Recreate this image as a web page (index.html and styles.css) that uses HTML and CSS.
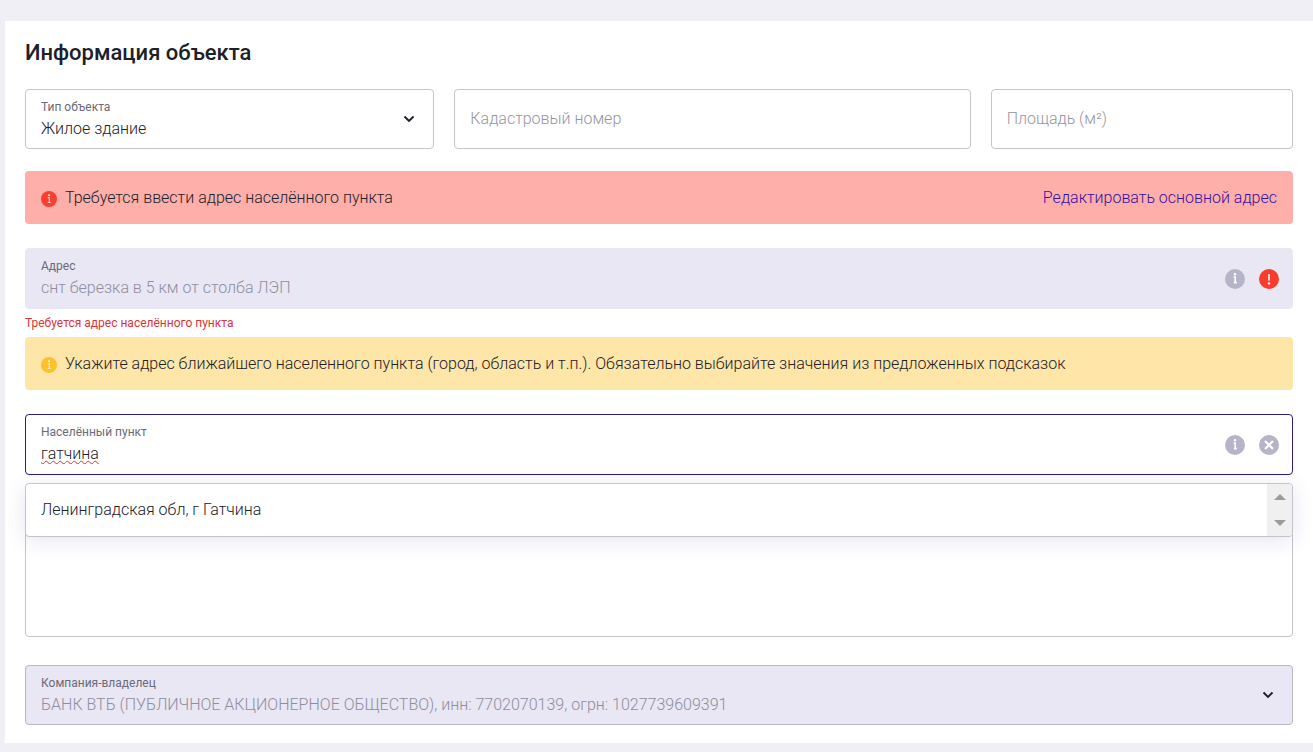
FILE: index.html
```html
<!DOCTYPE html>
<html lang="ru">
<head>
<meta charset="utf-8">
<meta name="viewport" content="width=device-width, initial-scale=1">
<title>Информация объекта</title>
<link rel="stylesheet" href="styles.css">
</head>
<body>
<main class="card">
  <h1 class="title">Информация объекта</h1>
  <form class="form">
    <div class="row">
      <div class="field field-select">
        <div class="field-body">
          <label class="label" for="type">Тип объекта</label>
          <select class="control" id="type"><option>Жилое здание</option></select>
        </div>
        <svg class="chevron" viewBox="0 0 24 24" aria-hidden="true"><path d="M7.5 9.5l4.5 4.5 4.5-4.5"/></svg>
      </div>
      <div class="field">
        <input class="control" id="cadastre" type="text" aria-label="Кадастровый номер" placeholder="Кадастровый номер">
      </div>
      <div class="field">
        <input class="control" id="area" type="text" aria-label="Площадь (м²)" placeholder="Площадь (м²)">
      </div>
    </div>

    <div class="alert alert-error">
      <svg class="alert-icon" viewBox="0 0 20 20" aria-hidden="true"><circle cx="10" cy="10" r="10"/><path class="mark" d="M8.4 8.4h1.9v6.2M8.4 14.4h3.8"/><circle class="dot" cx="10" cy="5.4" r="1.2"/></svg>
      <span class="alert-text">Требуется ввести адрес населённого пункта</span>
      <a class="link" href="#address">Редактировать основной адрес</a>
    </div>

    <div class="field field-wide field-disabled">
      <div class="field-body">
        <label class="label" for="address">Адрес</label>
        <input class="control" id="address" type="text" value="снт березка в 5 км от столба ЛЭП" disabled>
      </div>
      <button class="icon-button" type="button" aria-label="Справка">
        <svg class="icon" viewBox="0 0 20 20"><circle cx="10" cy="10" r="10"/><path class="mark" d="M8.6 8h1.6v5.6M8.8 13.6h3"/><circle class="dot" cx="10" cy="5.2" r="1.2"/></svg>
      </button>
      <svg class="icon icon-error" viewBox="0 0 20 20" role="img" aria-label="Ошибка"><circle cx="10" cy="10" r="10"/><path class="mark" d="M10 5v6.4"/><circle class="dot" cx="10" cy="14.4" r="1.2"/></svg>
    </div>
    <p class="error-text">Требуется адрес населённого пункта</p>

    <div class="alert alert-warning">
      <svg class="alert-icon" viewBox="0 0 20 20" aria-hidden="true"><circle cx="10" cy="10" r="10"/><path class="mark" d="M8.4 8.4h1.9v6.2M8.4 14.4h3.8"/><circle class="dot" cx="10" cy="5.4" r="1.2"/></svg>
      <span class="alert-text">Укажите адрес ближайшего населенного пункта (город, область и т.п.). Обязательно выбирайте значения из предложенных подсказок</span>
    </div>

    <div class="combo">
      <div class="field field-wide field-active">
        <div class="field-body">
          <label class="label" for="town">Населённый пункт</label>
          <input class="control misspelled" id="town" type="text" value="гатчина" spellcheck="false">
        </div>
        <button class="icon-button" type="button" aria-label="Справка">
          <svg class="icon" viewBox="0 0 20 20"><circle cx="10" cy="10" r="10"/><path class="mark" d="M8.6 8h1.6v5.6M8.8 13.6h3"/><circle class="dot" cx="10" cy="5.2" r="1.2"/></svg>
        </button>
        <button class="icon-button" type="button" aria-label="Очистить">
          <svg class="icon" viewBox="0 0 20 20"><circle cx="10" cy="10" r="10"/><path class="mark mark-bold" d="M6 6l8 8M14 6l-8 8"/></svg>
        </button>
      </div>
      <div class="suggestions">
        <button class="suggestion" type="button">Ленинградская обл, г Гатчина</button>
        <div class="scroller" aria-hidden="true">
          <svg class="arrow" viewBox="0 0 12 6"><path d="M0 6l6-6 6 6z"/></svg>
          <svg class="arrow" viewBox="0 0 12 6"><path d="M0 0l6 6 6-6z"/></svg>
        </div>
      </div>
    </div>

    <textarea class="comment" aria-label="Комментарий"></textarea>

    <div class="field field-select field-disabled field-bordered">
      <div class="field-body">
        <label class="label" for="owner">Компания-владелец</label>
        <select class="control" id="owner" disabled><option>БАНК ВТБ (ПУБЛИЧНОЕ АКЦИОНЕРНОЕ ОБЩЕСТВО), инн: 7702070139, огрн: 1027739609391</option></select>
      </div>
      <svg class="chevron" viewBox="0 0 24 24" aria-hidden="true"><path d="M7.5 9.5l4.5 4.5 4.5-4.5"/></svg>
    </div>
  </form>
</main>
</body>
</html>
```
FILE: styles.css
```css
* { box-sizing: border-box; }

body {
  margin: 0;
  padding: 21px 0 9px 5px;
  background: #f0eff6;
  color: #1c2029;
  font-family: Roboto, "Liberation Sans", sans-serif;
  font-size: 16px;
  font-weight: 350;
  line-height: 24px;
}

.card {
  padding: 18px 20px;
  background: #fff;
}

.title {
  margin: 0 0 22px;
  font-size: 22px;
  line-height: 28px;
  font-weight: 500;
}

.form {
  display: flex;
  flex-direction: column;
}

.row {
  display: grid;
  grid-template-columns: 409fr 516fr 302fr;
  gap: 20px;
}

.field {
  display: flex;
  align-items: center;
  gap: 14px;
  min-height: 60px;
  padding: 0 12px 0 15px;
  border: 1px solid #c5c4cc;
  border-radius: 4px;
  background: #fff;
}

.field-select .field-body { padding-top: 2px; }

.field-wide {
  min-height: 61px;
  padding: 0 13px 0 15px;
}

.field-disabled {
  border-color: #e9e7f3;
  background: #e9e7f3;
}

.field-bordered { border-color: #b9b6c9; }

.field-active { border-color: #2f1b7a; }

.field-body {
  display: flex;
  flex: 1;
  flex-direction: column;
  min-width: 0;
  gap: 2px;
}

.label {
  color: #6b6a78;
  font-size: 12px;
  font-weight: 400;
  line-height: 16px;
}

.control {
  width: 100%;
  height: 24px;
  margin: 0;
  padding: 0;
  border: 0;
  outline: 0;
  background: transparent;
  color: #1c2029;
  font: inherit;
  appearance: none;
}

.control::placeholder { color: #9594a3; }

.control:disabled {
  color: #8f8da0;
  opacity: 1;
}

.misspelled {
  text-decoration: underline wavy #e0302a 1px;
  text-decoration-skip-ink: none;
}

.chevron {
  flex: none;
  width: 24px;
  height: 24px;
  fill: none;
  stroke: #1c1a26;
  stroke-width: 1.8;
  pointer-events: none;
}

.alert {
  display: flex;
  align-items: center;
  gap: 8px;
  min-height: 53px;
  padding: 0 16px;
  border-radius: 4px;
}

.alert-error {
  margin: 22px 0 24px;
  background: #ffafa9;
}

.alert-warning {
  margin-bottom: 24px;
  background: #fee6a8;
}

.alert-icon {
  flex: none;
  width: 16px;
  height: 16px;
  margin-top: 2px;
}

.alert-error .alert-icon { fill: #f9402f; }
.alert-warning .alert-icon { fill: #fcc12b; }

.alert-text { flex: 1; }

.link {
  color: #35109c;
  text-decoration: none;
}

.icon-button {
  flex: none;
  width: 20px;
  height: 20px;
  padding: 0;
  border: 0;
  background: none;
}

.icon {
  display: block;
  flex: none;
  width: 20px;
  height: 20px;
  fill: #b6b4c9;
}

.icon-error { fill: #fa3c2d; }

.mark {
  fill: none;
  stroke: #fff;
  stroke-width: 1.6;
}

.alert .mark { stroke-width: 1.5; stroke-opacity: 0.7; }

.mark-bold { stroke-width: 2.2; }

.dot { fill: #fff; }

.error-text {
  margin: 6px 0;
  color: #d9333a;
  font-size: 12px;
  font-weight: 400;
  line-height: 16px;
}

.combo { position: relative; }

.suggestions {
  position: absolute;
  top: calc(100% + 8px);
  right: 0;
  left: 0;
  display: flex;
  min-height: 54px;
  overflow: hidden;
  border: 1px solid #c5c4cc;
  border-radius: 4px;
  background: #fff;
  box-shadow: 0 4px 20px rgba(80, 70, 160, 0.14);
}

.suggestion {
  flex: 1;
  padding: 0 15px;
  border: 0;
  background: none;
  color: #1c2029;
  font: inherit;
  text-align: left;
}

.scroller {
  display: flex;
  flex-direction: column;
  align-items: center;
  justify-content: space-between;
  width: 25px;
  padding: 10px 0;
  background: #f0f0f0;
}

.arrow {
  width: 12px;
  height: 6px;
  fill: #9c9c9c;
}

.comment {
  height: 138px;
  margin: 24px 0 28px;
  padding: 16px;
  border: 1px solid #c5c4cc;
  border-radius: 4px;
  outline: 0;
  background: #fff;
  font: inherit;
  resize: none;
}
```
